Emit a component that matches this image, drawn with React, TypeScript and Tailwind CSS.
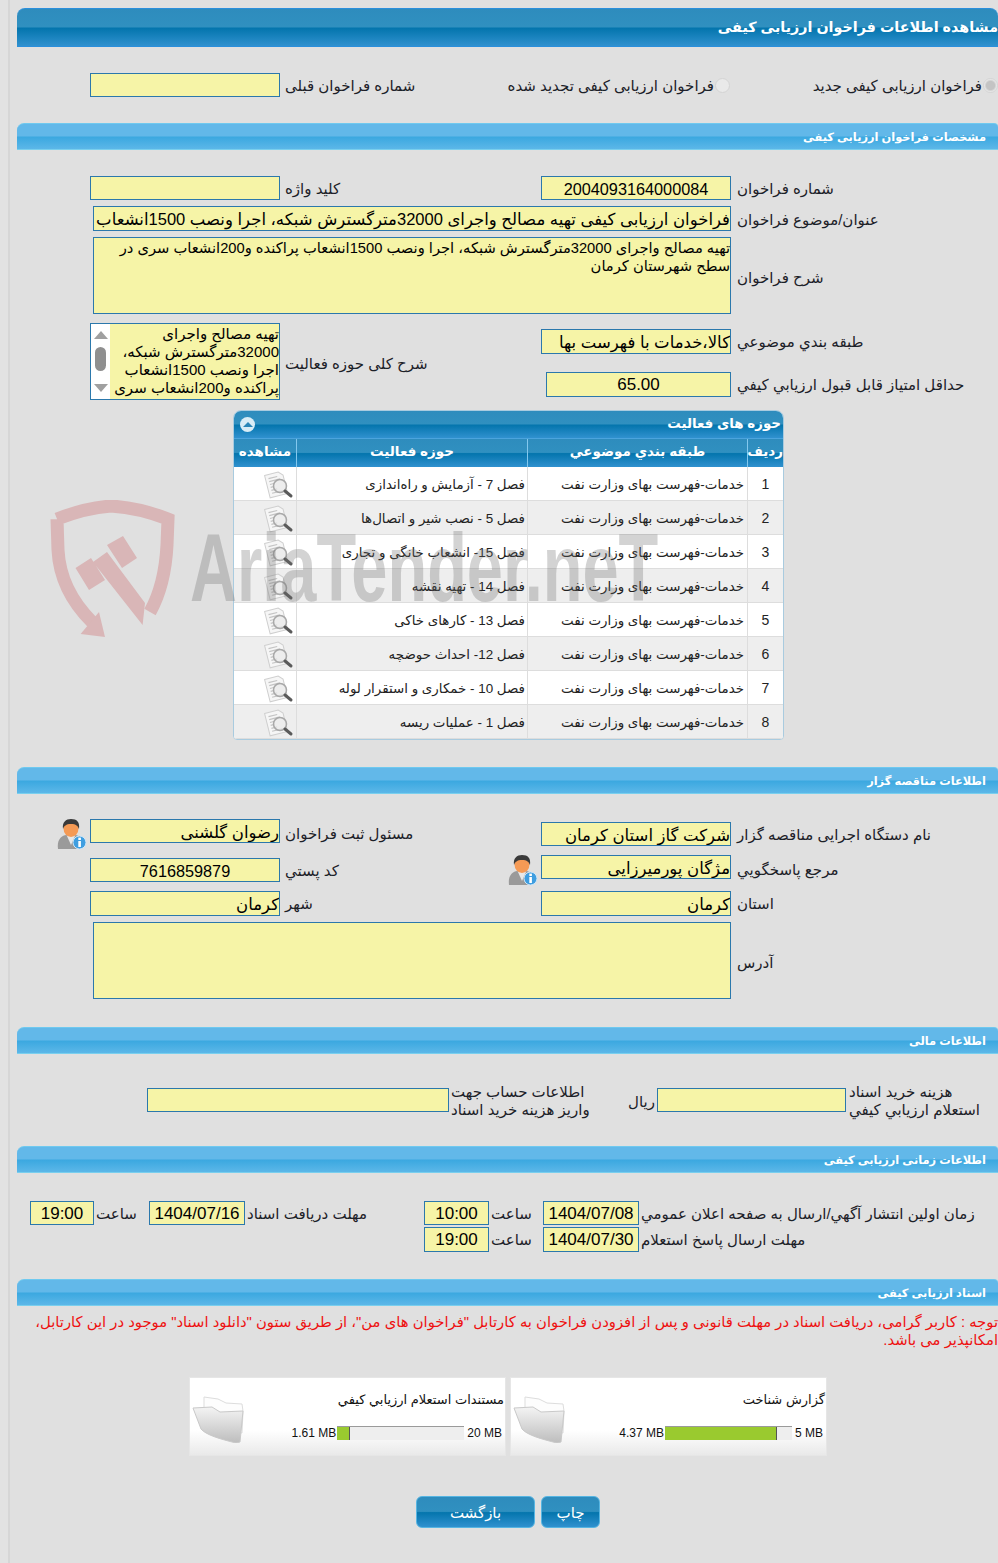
import React from "react";

const Box = ({ w, h = "h-[24px]", children, num = false, big = false, multi = false }: { w: string; h?: string; children?: React.ReactNode; num?: boolean; big?: boolean; multi?: boolean }) => (
  <div
    dir="rtl"
    className={`${w} ${h} shrink-0 border border-[#2b78ac] bg-[#f6f4a7] overflow-hidden text-black ${
      multi
        ? "whitespace-normal text-right text-[14.7px] leading-[18px] pt-[1px]"
        : big
        ? "whitespace-nowrap text-center text-[17px] leading-[24px]"
        : num
        ? "whitespace-nowrap text-center text-[16.25px] leading-[24px]"
        : "whitespace-nowrap text-right text-[16.5px] leading-[24px]"
    }`}
  >
    {children}
  </div>
);

const Label = ({ children, cls = "" }: { children: React.ReactNode; cls?: string }) => (
  <div dir="rtl" className={`whitespace-nowrap text-left text-[15px] leading-[26px] text-[#1c2128] ${cls}`}>{children}</div>
);

const blueGrad = "bg-[linear-gradient(#2e8cbd_0%,#3090c0_48%,#0475ad_52%,#3091cf_100%)]";

const Main = ({ children }: { children: React.ReactNode }) => (
  <div dir="rtl" className={`h-[39px] rounded-t-[8px] border-y border-[#2a8fdc] ${blueGrad} overflow-hidden whitespace-nowrap text-white font-bold text-[14.3px] leading-[36px]`}>
    {children}
  </div>
);
const Sub = ({ children, mt }: { children: React.ReactNode; mt: string }) => (
  <div dir="rtl" className={`${mt} h-[27px] rounded-tl-[7px] rounded-tr-[4px] border-y border-t-[#6fc9ef] border-b-[#79cfee] bg-[linear-gradient(#62b8e9_0%,#62b8e9_48%,#3ba8e0_52%,#5cb7e8_100%)] pr-[12px] text-white font-bold text-[11.4px] leading-[26px] whitespace-nowrap`}>
    {children}
  </div>
);

const Radio = ({ on = false }: { on?: boolean }) => (
  <span className={`inline-block w-[15px] h-[15px] shrink-0 rounded-full border border-[#d4d4d4] ${on ? "bg-[radial-gradient(#c4c4c4_45%,#ececec_70%)]" : "bg-[#e9e9e9]"}`} />
);

const DocIcon = () => (
  <svg width="32" height="30" viewBox="0 0 32 30">
    <g transform="rotate(-14 14 14)">
      <path d="M5 3h14l4 4v19H5z" fill="#f6f6f6" stroke="#cfcfcf" />
      <path d="M8 7h9M8 10h11M8 13h5M8 16h4M8 19h6M8 22h11" stroke="#c4c4c4" strokeWidth="1.2" />
    </g>
    <circle cx="18" cy="16" r="6.5" fill="#e9e9e9" fillOpacity="0.7" stroke="#a8a8a8" strokeWidth="1.5" />
    <path d="M23 21l6 5" stroke="#5a5a5a" strokeWidth="3" strokeLinecap="round" />
  </svg>
);

const PersonIcon = () => (
  <svg width="30" height="31" viewBox="0 0 30 31">
    <path d="M1 30c-1-8 2-13 8-14l5 2 5-2c4 1 6 4 7 8l-3 6z" fill="#9a9a9a" />
    <path d="M10 17l4 9 4-9z" fill="#e8e8e8" />
    <ellipse cx="14" cy="9.5" rx="7.5" ry="8.5" fill="#f59a55" />
    <path d="M6 10C5 3 9 0 14 0c6 0 9 3 8 10-1-3-3-5-8-5S7 7 6 10z" fill="#3a3a3a" />
    <circle cx="22.5" cy="23.5" r="6.5" fill="#3f9ee0" stroke="#cfe6f7" />
    <rect x="21.3" y="22" width="2.6" height="6" fill="#fff" />
    <rect x="21.3" y="18.6" width="2.6" height="2.4" fill="#fff" />
  </svg>
);

const Folder = ({ id }: { id: string }) => (
  <svg width="56" height="50" viewBox="0 0 56 50">
    <defs>
      <linearGradient id={id} x1="0" y1="0" x2="0" y2="1">
        <stop offset="0" stopColor="#f4f4f4" />
        <stop offset="1" stopColor="#bdbdbd" />
      </linearGradient>
    </defs>
    <path d="M12 4l14 2 8 4 16 1 1 7-1 22-38-8z" fill="#fdfdfd" stroke="#dddddd" />
    <path d="M1 15l19-1 8 5 23-1-3 31-4 1C28 46 14 42 9 36z" fill={`url(#${id})`} stroke="#c9c9c9" />
  </svg>
);

const rows = [
  "فصل 7 - آزمایش و راه‌اندازی",
  "فصل 5 - نصب شیر و اتصال‌ها",
  "فصل 15- انشعاب خانگی و تجاری",
  "فصل 14 - تهیه نقشه",
  "فصل 13 - کارهای خاکی",
  "فصل 12- احداث حوضچه",
  "فصل 10 - خمکاری و استقرار لوله",
  "فصل 1 - عملیات ریسه",
];

const Card = ({ id, title, used, total, pct }: { id: string; title: string; used: string; total: string; pct: number }) => (
  <div className="w-[317px] h-[79px] shrink-0 flex border border-[#e6e6e6] bg-[linear-gradient(#ffffff_0%,#ffffff_68%,#e9e9e9_100%)]">
    <div className="pl-[2px] pt-[15px] shrink-0"><Folder id={id} /></div>
    <div className="flex-1 flex flex-col items-end pr-[1px]">
      <div dir="rtl" className="mt-[13px] h-[18px] text-[13px] leading-[18px] text-[#111] whitespace-nowrap">{title}</div>
      <div className="mt-[17px] mr-[2px] flex items-center font-['Liberation_Sans'] text-[12px] leading-[14px] text-[#111]">
        <span className="mr-[1px]">{used}</span>
        <div className="w-[127px] h-[14px] bg-[#eeeeee] border-t border-[#9a9a9a]">
          <div className="h-[13px] bg-[#9aca2f] border-r border-[#555]" style={{ width: `${pct}%` }} />
        </div>
        <span className="ml-[3px]">{total}</span>
      </div>
    </div>
  </div>
);

const TableGrid = "grid grid-cols-[63px_231px_220px_35px]";

export default function App() {
  return (
    <div className="relative w-[998px] h-[1563px] overflow-hidden bg-[#e2e2e2] font-['Liberation_Sans','DejaVu_Sans',sans-serif]">
      <div className="ml-[8px] h-[1563px] border-l-2 border-[#d6d6d6] bg-[#e0e0e0] pl-[7px] pt-[8px]">
        <Main>مشاهده اطلاعات فراخوان ارزیابی کیفی</Main>

        <div className="mt-[26px] h-[24px] flex pl-[73px]">
          <Box w="w-[190px]" />
          <Label cls="ml-[5px] w-[220px]">شماره فراخوان قبلی</Label>
          <div className="w-[225px] flex justify-end items-start gap-[1px]">
            <Label>فراخوان ارزیابی کیفی تجدید شده</Label>
            <span className="mt-[3px]"><Radio /></span>
          </div>
          <div className="ml-[84px] w-[184px] flex justify-end items-start gap-[1px]">
            <Label>فراخوان ارزیابی کیفی جدید</Label>
            <span className="mt-[3px]"><Radio on /></span>
          </div>
        </div>

        <Sub mt="mt-[26px]">مشخصات فراخوان ارزیابی کیفی</Sub>

        <div className="mt-[26px] h-[24px] flex pl-[73px]">
          <div className="w-[451px] flex">
            <Box w="w-[190px]" />
            <Label cls="ml-[5px]">کلید واژه</Label>
          </div>
          <div className="flex">
            <Box w="w-[190px]" num>2004093164000084</Box>
            <Label cls="ml-[6px]">شماره فراخوان</Label>
          </div>
        </div>

        <div className="mt-[6px] h-[25px] flex pl-[76px]">
          <Box w="w-[638px]" h="h-[25px]">فراخوان ارزیابی کیفی تهیه مصالح واجرای 32000مترگسترش شبکه، اجرا ونصب 1500انشعاب</Box>
          <Label cls="ml-[6px] mt-[1px]">عنوان/موضوع فراخوان</Label>
        </div>

        <div className="mt-[6px] flex items-center pl-[76px]">
          <Box w="w-[638px]" h="h-[77px]" multi>
            تهیه مصالح واجرای 32000مترگسترش شبکه، اجرا ونصب 1500انشعاب پراکنده و200انشعاب سری در سطح شهرستان کرمان
          </Box>
          <Label cls="ml-[6px] mt-[4px]">شرح فراخوان</Label>
        </div>

        <div className="mt-[9px] h-[77px] flex pl-[73px]">
          <div className="w-[451px] flex items-center">
            <div className="w-[190px] h-[77px] flex shrink-0 border border-[#2b78ac] bg-[#f6f4a7] overflow-hidden">
              <div className="w-[19px] h-full shrink-0 bg-white flex flex-col items-center justify-between py-[7px]">
                <span className="w-0 h-0 border-x-[7px] border-x-transparent border-b-[8px] border-b-[#a0a0a0]" />
                <span className="mb-[6px] w-[11px] h-[24px] rounded-full bg-[#8f8f8f]" />
                <span className="w-0 h-0 border-x-[7px] border-x-transparent border-t-[8px] border-t-[#a0a0a0]" />
              </div>
              <div dir="rtl" className="flex-1 pt-[1px] text-[15px] leading-[18px] text-black text-right">
                تهیه مصالح واجرای 32000مترگسترش شبکه، اجرا ونصب 1500انشعاب پراکنده و200انشعاب سری
              </div>
            </div>
            <Label cls="ml-[5px] mt-[4px]">شرح کلی حوزه فعالیت</Label>
          </div>
          <div className="flex flex-col">
            <div className="mt-[6px] h-[25px] flex">
              <Box w="w-[190px]" h="h-[25px]">کالا،خدمات با فهرست بها</Box>
              <Label cls="ml-[6px]">طبقه بندي موضوعي</Label>
            </div>
            <div className="mt-[18px] h-[25px] flex pl-[5px]">
              <Box w="w-[185px]" h="h-[25px]" big>65.00</Box>
              <Label cls="ml-[6px]">حداقل امتياز قابل قبول ارزيابي کيفي</Label>
            </div>
          </div>
        </div>

        <div className="mt-[10px] ml-[216px] w-[551px] h-[330px] rounded-t-[8px] rounded-b-[4px] border border-[#a9cbdf] bg-white overflow-hidden">
          <div dir="rtl" className={`h-[28px] flex items-center justify-between pr-[2px] pl-[6px] ${blueGrad} border-b border-[#4ba4dd] text-white font-bold text-[13.4px] whitespace-nowrap`}>
            <span>حوزه های فعالیت</span>
            <span className="w-[15px] h-[15px] rounded-full bg-[#d8ecf6] flex items-center justify-center">
              <span className="w-0 h-0 border-x-[5px] border-x-transparent border-b-[5px] border-b-[#2a86b8]" />
            </span>
          </div>
          <div className={`${TableGrid} h-[28px] ${blueGrad} text-white font-bold text-[13.5px] leading-[25px] text-center whitespace-nowrap`}>
            <div dir="rtl" className="border-r border-[#83c8ee]">مشاهده</div>
            <div dir="rtl" className="border-r border-[#83c8ee]">حوزه فعالیت</div>
            <div dir="rtl" className="border-r border-[#83c8ee]">طبقه بندي موضوعي</div>
            <div dir="rtl">رديف</div>
          </div>
          {rows.map((r, i) => (
            <div key={r} className={`${TableGrid} h-[34px] border-b border-[#dddddd] text-[13.4px] leading-[35px] text-[#222] whitespace-nowrap ${i % 2 ? "bg-[#eeeeee]" : "bg-white"}`}>
              <div className="border-r border-[#dddddd] flex justify-end items-center pr-[2px]"><DocIcon /></div>
              <div dir="rtl" className="border-r border-[#dddddd] pr-[2px]">{r}</div>
              <div dir="rtl" className="border-r border-[#dddddd] pr-[3px]">خدمات-فهرست بهای وزارت نفت</div>
              <div className="text-center text-[14px] leading-[34px] font-['Liberation_Sans']">{i + 1}</div>
            </div>
          ))}
        </div>

        <Sub mt="mt-[27px]">اطلاعات مناقصه گزار</Sub>

        <div className="mt-[25px] flex pl-[38px]">
          <div className="w-[451px] flex flex-col">
            <div className="flex h-[24px]">
              <div className="w-[35px] shrink-0 pl-[2px]"><PersonIcon /></div>
              <Box w="w-[190px]">رضوان گلشنی</Box>
              <Label cls="ml-[5px] mt-[2px]">مسئول ثبت فراخوان</Label>
            </div>
            <div className="flex h-[24px] mt-[15px]">
              <div className="w-[35px] shrink-0" />
              <Box w="w-[190px]" num>7616859879</Box>
              <Label cls="ml-[5px]">کد پستي</Label>
            </div>
            <div className="flex h-[25px] mt-[9px]">
              <div className="w-[35px] shrink-0" />
              <Box w="w-[190px]" h="h-[25px]">کرمان</Box>
              <Label cls="ml-[5px]">شهر</Label>
            </div>
          </div>
          <div className="flex flex-col">
            <div className="flex h-[24px] mt-[3px]">
              <div className="w-[35px] shrink-0" />
              <Box w="w-[190px]">شرکت گاز استان کرمان</Box>
              <Label cls="ml-[6px]">نام دستگاه اجرایی مناقصه گزار</Label>
            </div>
            <div className="flex h-[24px] mt-[9px]">
              <div className="w-[35px] shrink-0 pl-[2px]"><PersonIcon /></div>
              <Box w="w-[190px]">مژگان پورمیرزایی</Box>
              <Label cls="ml-[6px] mt-[2px]">مرجع پاسخگویي</Label>
            </div>
            <div className="flex h-[25px] mt-[12px]">
              <div className="w-[35px] shrink-0" />
              <Box w="w-[190px]" h="h-[25px]">کرمان</Box>
              <Label cls="ml-[6px]">استان</Label>
            </div>
          </div>
        </div>

        <div className="mt-[6px] flex items-center pl-[76px]">
          <Box w="w-[638px]" h="h-[77px]" />
          <Label cls="ml-[6px] mt-[4px]">آدرس</Label>
        </div>

        <Sub mt="mt-[28px]">اطلاعات مالی</Sub>

        <div className="mt-[29px] h-[36px] flex items-start pl-[130px]">
          <div className="mt-[5px]"><Box w="w-[302px]" /></div>
          <div dir="rtl" className="ml-[2px] w-[177px] shrink-0 text-left text-[15px] leading-[18px] text-[#1c2128] whitespace-nowrap">
            <div>اطلاعات حساب جهت</div>
            <div>واریز هزینه خرید اسناد</div>
          </div>
          <Label cls="w-[29px] mt-[6px]">ريال</Label>
          <div className="mt-[5px]"><Box w="w-[189px]" /></div>
          <div dir="rtl" className="ml-[3px] text-left text-[15px] leading-[18px] text-[#1c2128] whitespace-nowrap">
            <div>هزینه خرید اسناد</div>
            <div>استعلام ارزيابي کيفي</div>
          </div>
        </div>

        <Sub mt="mt-[27px]">اطلاعات زمانی ارزیابی کیفی</Sub>

        <div className="mt-[28px] h-[51px] flex pl-[13px]">
          <div className="flex w-[394px] h-[24px]">
            <Box w="w-[64px]" big>19:00</Box>
            <Label cls="ml-[2px] w-[53px]">ساعت</Label>
            <Box w="w-[96px]" big>1404/07/16</Box>
            <Label cls="ml-[2px]">مهلت دریافت اسناد</Label>
          </div>
          <div className="flex flex-col">
            <div className="flex h-[24px]">
              <Box w="w-[65px]" big>10:00</Box>
              <Label cls="ml-[2px] w-[52px]">ساعت</Label>
              <Box w="w-[96px]" big>1404/07/08</Box>
              <Label cls="ml-[2px]">زمان اولین انتشار آگهي/ارسال به صفحه اعلان عمومي</Label>
            </div>
            <div className="flex h-[25px] mt-[2px]">
              <Box w="w-[65px]" h="h-[25px]" big>19:00</Box>
              <Label cls="ml-[2px] w-[52px]">ساعت</Label>
              <Box w="w-[96px]" h="h-[25px]" big>1404/07/30</Box>
              <Label cls="ml-[2px]">مهلت ارسال پاسخ استعلام</Label>
            </div>
          </div>
        </div>

        <Sub mt="mt-[27px]">اسناد ارزیابی کیفی</Sub>

        <div dir="rtl" className="mt-[7px] h-[36px] text-[14.8px] leading-[18px] text-[#ee1111] whitespace-nowrap">
          <div>توجه : کاربر گرامی، دریافت اسناد در مهلت قانونی و پس از افزودن فراخوان به کارتابل "فراخوان های من"، از طریق ستون "دانلود اسناد" موجود در این کارتابل،</div>
          <div>امکانپذیر می باشد.</div>
        </div>

        <div className="mt-[28px] ml-[172px] flex gap-[4px]">
          <Card id="f1" title="مستندات استعلام ارزيابي کيفي" used="1.61 MB" total="20 MB" pct={10} />
          <Card id="f2" title="گزارش شناخت" used="4.37 MB" total="5 MB" pct={88} />
        </div>

        <div className="mt-[40px] ml-[399px] flex gap-[6px]">
          <div dir="rtl" className={`w-[119px] h-[32px] rounded-[6px] border border-[#56b5e2] ${blueGrad} text-white text-center text-[15px] leading-[32px]`}>بازگشت</div>
          <div dir="rtl" className={`w-[59px] h-[32px] rounded-[6px] border border-[#56b5e2] ${blueGrad} text-white text-center text-[15px] leading-[32px]`}>چاپ</div>
        </div>
      </div>

      <svg className="absolute left-[50px] top-[500px] pointer-events-none" width="125" height="138" viewBox="50 500 125 138">
        <path d="M57 519Q85 508 111 506Q140 508 168 519L167 545Q165 585 150 612M57 519L58 550Q60 590 92 622" fill="none" stroke="#d9b6b7" strokeWidth="13" />
        <path d="M99 612L105 637L80.6 634z" fill="#d9b6b7" />
        <path d="M75.5 568L91 558L105 580L89 590zM107 545L123 536L137 558L122 568zM93 562L107 552L145 603L142.6 625z" fill="#d9b6b7" />
      </svg>
      <div className="absolute left-[190px] top-[513px] origin-left scale-x-[0.67] text-[97px] leading-[110px] font-bold text-[#6e6e6e]/30 whitespace-nowrap font-['Liberation_Sans'] pointer-events-none">
        AriaTender.neT
      </div>
    </div>
  );
}
